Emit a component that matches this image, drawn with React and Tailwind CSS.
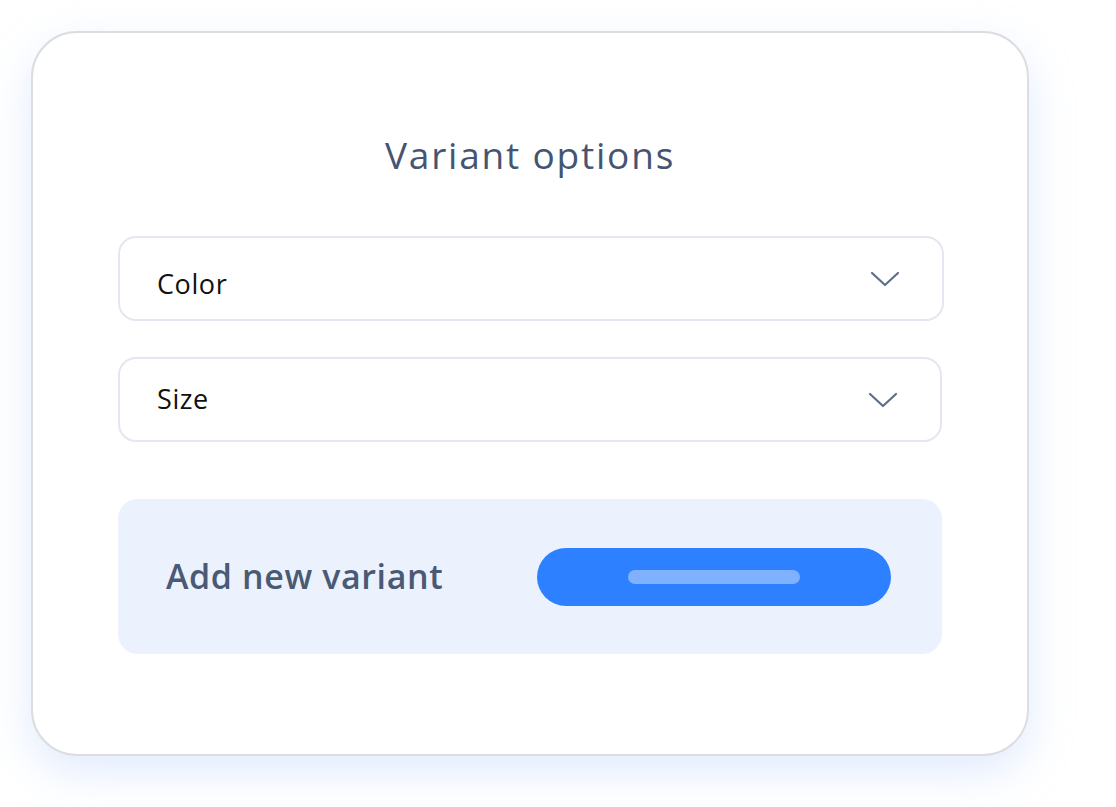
import React from 'react';

const Chevron = () => (
  <svg width="30" height="18" viewBox="0 0 30 18" fill="none" className="shrink-0">
    <path d="M2 3l13 12L28 3" stroke="#5d6e8c" strokeWidth="2.2" strokeLinecap="round" strokeLinejoin="round" />
  </svg>
);

const Select = ({ label, className, textClass }) => (
  <div className={`flex h-[85px] items-center justify-between rounded-[18px] border-2 border-[#e6e6f0] bg-white pl-[37px] pr-[42px] ${className}`}>
    <span className={`text-[27px] tracking-[0.6px] text-[#111] ${textClass}`}>{label}</span>
    <Chevron />
  </div>
);

const App = () => (
  <div className="min-h-screen bg-white pl-[31px] pt-[31px] font-['Open_Sans',sans-serif]">
    <div className="flex h-[725px] w-[998px] flex-col rounded-[46px] border-2 border-[#dcdde1] bg-white px-[85px] shadow-[0_16px_44px_rgba(180,204,250,0.4)]">
      <h1 className="mt-[103px] text-center text-[37px] font-normal leading-none tracking-[1.8px] text-[#45556f]">Variant options</h1>

      <div className="mt-[63px] flex flex-col gap-[36px]">
        <Select label="Color" className="mr-[-2px]" textClass="pt-[11px]" />
        <Select label="Size" />
      </div>

      <div className="mt-[57px] flex h-[155px] items-center rounded-[20px] bg-[#ebf2fd] pl-[48px] pr-[51px]">
        <span className="text-[34px] font-semibold tracking-[0.6px] text-[#4a5a74]">Add new variant</span>
        <div className="ml-auto flex h-[58px] w-[354px] items-center justify-center rounded-full bg-[#2d80ff]">
          <div className="h-[14px] w-[172px] rounded-full bg-[#80b1ff]" />
        </div>
      </div>
    </div>
  </div>
);

export default App;
